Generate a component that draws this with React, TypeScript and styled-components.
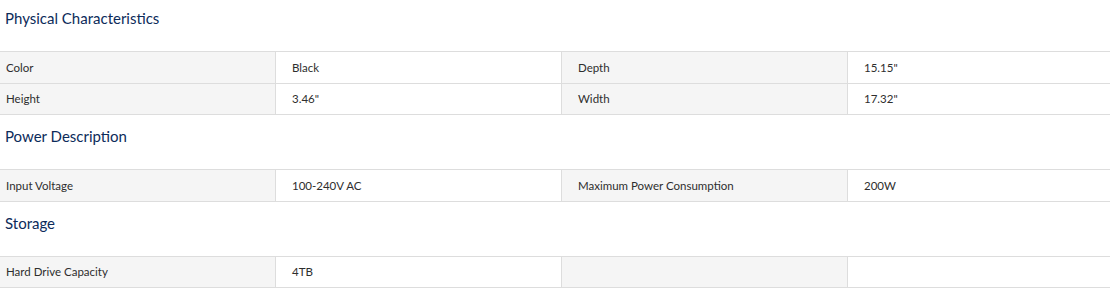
import React from "react";
import styled, { createGlobalStyle } from "styled-components";

const Global = createGlobalStyle`
  html, body { margin: 0; padding: 0; background: #fff; }
  body { font-family: "Lato", "Noto Sans", sans-serif; color: #333; }
`;

const Page = styled.div`
  width: 1110px;
  overflow: hidden;
  margin-top: -3px;
`;

const Section = styled.section`
  display: flex;
  flex-direction: column;
`;

const Heading = styled.h3`
  margin: 0;
  padding: 10px 5px 0;
  height: 44px;
  font-size: 15px;
  line-height: 22px;
  font-weight: 400;
  color: #0c2b5a;
`;

const Table = styled.div`
  display: grid;
  grid-template-columns: 286px 286px 286px 1fr;
  margin-left: -10px;
  border-top: 1px solid #dddddd;
`;

const Cell = styled.div<{ $label?: boolean }>`
  height: 31.5px;
  box-sizing: border-box;
  display: flex;
  align-items: center;
  padding: 0 16px;
  font-size: 11.5px;
  color: #2e2e2e;
  background: ${(p) => (p.$label ? "#f5f5f5" : "#ffffff")};
  border-bottom: 1px solid #dddddd;
  border-right: 1px solid #dddddd;
  &:nth-child(4n) { border-right: none; }
`;

type Row = [string, string, string, string];

const sections: { title: string; rows: Row[] }[] = [
  {
    title: "Physical Characteristics",
    rows: [
      ["Color", "Black", "Depth", "15.15\""],
      ["Height", "3.46\"", "Width", "17.32\""],
    ],
  },
  {
    title: "Power Description",
    rows: [["Input Voltage", "100-240V AC", "Maximum Power Consumption", "200W"]],
  },
  {
    title: "Storage",
    rows: [["Hard Drive Capacity", "4TB", "", ""]],
  },
];

export default function App() {
  return (
    <>
      <Global />
      <Page>
        {sections.map((s) => (
          <Section key={s.title}>
            <Heading>{s.title}</Heading>
            <Table>
              {s.rows.map((r, i) =>
                r.map((c, j) => (
                  <Cell key={`${i}-${j}`} $label={j % 2 === 0}>
                    {c}
                  </Cell>
                ))
              )}
            </Table>
          </Section>
        ))}
      </Page>
    </>
  );
}
